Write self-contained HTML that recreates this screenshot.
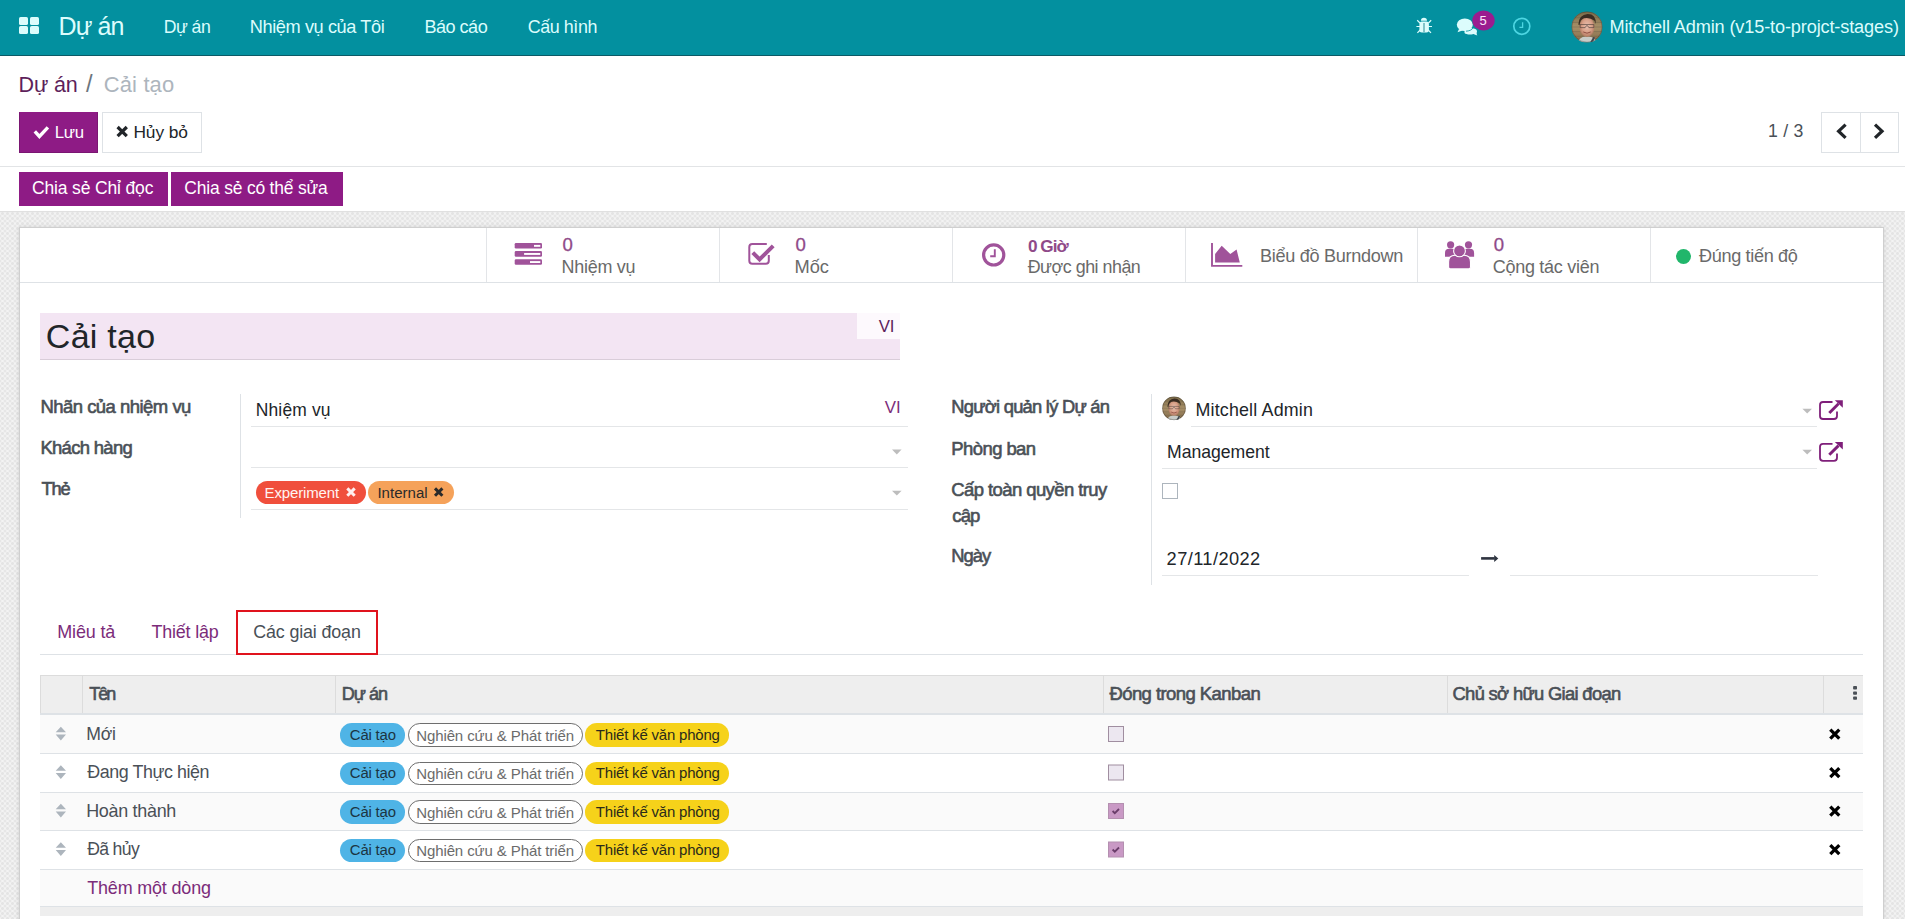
<!DOCTYPE html><html><head><meta charset="utf-8"><style>
html,body{margin:0;padding:0;}
body{width:1905px;height:919px;overflow:hidden;position:relative;background:#fff;font-family:"Liberation Sans",sans-serif;}
.t{position:absolute;white-space:nowrap;}
.b{position:absolute;}
svg{position:absolute;overflow:visible;}
</style></head><body>
<div class="b" style="left:0px;top:0px;width:1905px;height:55px;background:#03909f;"></div>
<div class="b" style="left:0px;top:55px;width:1905px;height:1px;background:#0b5a66;"></div>
<div class="b" style="left:19px;top:17px;width:9.2px;height:7.9px;background:#dcfcfc;border-radius:1.6px;"></div>
<div class="b" style="left:30px;top:17px;width:9.2px;height:7.9px;background:#dcfcfc;border-radius:1.6px;"></div>
<div class="b" style="left:19px;top:26.2px;width:9.2px;height:7.9px;background:#dcfcfc;border-radius:1.6px;"></div>
<div class="b" style="left:30px;top:26.2px;width:9.2px;height:7.9px;background:#dcfcfc;border-radius:1.6px;"></div>
<div class="t" style="left:58.50px;top:11.12px;font-size:25.05px;line-height:31px;letter-spacing:-0.909px;color:#dcfcfc;">Dự án</div>
<div class="t" style="left:163.70px;top:16.17px;font-size:17.69px;line-height:22px;letter-spacing:-0.542px;color:#dcfcfc;">Dự án</div>
<div class="t" style="left:249.80px;top:15.99px;font-size:18.19px;line-height:22px;letter-spacing:-0.416px;color:#dcfcfc;">Nhiệm vụ của Tôi</div>
<div class="t" style="left:424.40px;top:16.02px;font-size:18.12px;line-height:22px;letter-spacing:-0.518px;color:#dcfcfc;">Báo cáo</div>
<div class="t" style="left:527.70px;top:16.08px;font-size:17.93px;line-height:22px;letter-spacing:-0.428px;color:#dcfcfc;">Cấu hình</div>
<div class="t" style="left:1609.40px;top:16.00px;font-size:18.18px;line-height:22px;letter-spacing:-0.147px;color:#dcfcfc;">Mitchell Admin (v15-to-projct-stages)</div>
<div class="t" style="left:18.60px;top:71.84px;font-size:21.52px;line-height:26px;letter-spacing:-0.153px;color:#5e1f5b;">Dự án</div>
<div class="t" style="left:86.00px;top:69.61px;font-size:23.62px;line-height:29px;letter-spacing:0.000px;color:#6c757d;">/</div>
<div class="t" style="left:103.80px;top:71.19px;font-size:21.94px;line-height:27px;letter-spacing:0.142px;color:#adb5bd;">Cải tạo</div>
<div class="b" style="left:19px;top:112px;width:79px;height:41px;background:#8e1b85;border:1px solid #7a1672;border-top-color:#8e1b85;box-sizing:border-box;"></div>
<div class="t" style="left:54.70px;top:121.99px;font-size:16.76px;line-height:21px;letter-spacing:-0.220px;color:#ffffff;">Lưu</div>
<div class="b" style="left:102px;top:112px;width:100px;height:41px;background:#fff;border:1px solid #dee2e6;box-sizing:border-box;"></div>
<div class="t" style="left:133.40px;top:121.78px;font-size:17.36px;line-height:21px;letter-spacing:-0.087px;color:#212529;">Hủy bỏ</div>
<div class="t" style="left:1768.10px;top:120.16px;font-size:17.70px;line-height:22px;letter-spacing:0.193px;color:#495057;">1 / 3</div>
<div class="b" style="left:1821px;top:112px;width:78px;height:41px;background:#fff;border:1px solid #dee2e6;box-sizing:border-box;"></div>
<div class="b" style="left:1860px;top:112px;width:1px;height:41px;background:#dee2e6;"></div>
<div class="b" style="left:0px;top:166px;width:1905px;height:1px;background:#e2e4e6;"></div>
<div class="b" style="left:19px;top:172px;width:149px;height:34px;background:#8e1b85;"></div>
<div class="b" style="left:171px;top:172px;width:172px;height:34px;background:#8e1b85;"></div>
<div class="t" style="left:31.90px;top:177.23px;font-size:17.50px;line-height:22px;letter-spacing:-0.140px;color:#ffffff;">Chia sẻ Chỉ đọc</div>
<div class="t" style="left:184.30px;top:177.75px;font-size:17.45px;line-height:21px;letter-spacing:-0.173px;color:#ffffff;">Chia sẻ có thể sửa</div>
<div class="b" style="left:0px;top:211px;width:1905px;height:708px;background-color:#f9f9f9;background-image:radial-gradient(#e4e4e4 30%,transparent 62%),radial-gradient(#e4e4e4 30%,transparent 62%);background-size:5px 5px;background-position:0 0,2.5px 2.5px;"></div>
<div class="b" style="left:0px;top:211px;width:1905px;height:1px;background:#e0e0e0;"></div>
<div class="b" style="left:19px;top:227px;width:1865px;height:700px;background:#fff;border:1px solid #cfcfcf;box-sizing:border-box;box-shadow:0 0 4px rgba(0,0,0,.12);"></div>
<div class="b" style="left:20px;top:282px;width:1863px;height:1px;background:#dee2e6;"></div>
<div class="b" style="left:486px;top:228px;width:1px;height:54px;background:#e3e5e8;"></div>
<div class="b" style="left:719px;top:228px;width:1px;height:54px;background:#e3e5e8;"></div>
<div class="b" style="left:952px;top:228px;width:1px;height:54px;background:#e3e5e8;"></div>
<div class="b" style="left:1185px;top:228px;width:1px;height:54px;background:#e3e5e8;"></div>
<div class="b" style="left:1417px;top:228px;width:1px;height:54px;background:#e3e5e8;"></div>
<div class="b" style="left:1650px;top:228px;width:1px;height:54px;background:#e3e5e8;"></div>
<div class="t" style="left:562.60px;top:233.35px;font-size:18.60px;line-height:23px;letter-spacing:0.000px;color:#8f4a89;-webkit-text-stroke:0.3px #8f4a89;">0</div>
<div class="t" style="left:561.60px;top:256.07px;font-size:17.97px;line-height:22px;letter-spacing:-0.274px;color:#6a6a6a;">Nhiệm vụ</div>
<div class="t" style="left:795.40px;top:233.35px;font-size:18.60px;line-height:23px;letter-spacing:0.000px;color:#8f4a89;-webkit-text-stroke:0.3px #8f4a89;">0</div>
<div class="t" style="left:794.40px;top:255.96px;font-size:18.28px;line-height:22px;letter-spacing:0.022px;color:#6a6a6a;">Mốc</div>
<div class="t" style="left:1027.90px;top:235.85px;font-size:17.17px;line-height:21px;letter-spacing:-0.933px;color:#8f4a89;font-weight:bold;">0 Giờ</div>
<div class="t" style="left:1027.70px;top:256.10px;font-size:17.88px;line-height:22px;letter-spacing:-0.489px;color:#6a6a6a;">Được ghi nhận</div>
<div class="t" style="left:1259.90px;top:245.03px;font-size:18.10px;line-height:22px;letter-spacing:-0.289px;color:#6a6a6a;">Biểu đồ Burndown</div>
<div class="t" style="left:1493.70px;top:233.35px;font-size:18.60px;line-height:23px;letter-spacing:0.000px;color:#8f4a89;-webkit-text-stroke:0.3px #8f4a89;">0</div>
<div class="t" style="left:1492.70px;top:256.06px;font-size:18.01px;line-height:22px;letter-spacing:-0.277px;color:#6a6a6a;">Cộng tác viên</div>
<div class="b" style="left:1676px;top:249px;width:15px;height:15px;background:#21b66b;border-radius:50%;"></div>
<div class="t" style="left:1699.00px;top:245.02px;font-size:18.11px;line-height:22px;letter-spacing:-0.352px;color:#6a6a6a;">Đúng tiến độ</div>
<div class="b" style="left:40px;top:313px;width:860px;height:47px;background:#f3e5f3;border-bottom:1px solid #d9cdd9;box-sizing:border-box;"></div>
<div class="b" style="left:857px;top:313px;width:43px;height:26px;background:#fdf9fd;"></div>
<div class="t" style="left:878.80px;top:315.98px;font-size:16.78px;line-height:21px;letter-spacing:-0.253px;color:#5e1f5b;">VI</div>
<div class="t" style="left:45.80px;top:316.00px;font-size:34.05px;line-height:41px;letter-spacing:0.243px;color:#212529;">Cải tạo</div>
<div class="b" style="left:240px;top:394px;width:1px;height:124px;background:#dee2e6;"></div>
<div class="t" style="left:40.40px;top:395.38px;font-size:18.52px;line-height:23px;letter-spacing:-0.533px;color:#4a5057;-webkit-text-stroke:0.6px #4a5057;">Nhãn của nhiệm vụ</div>
<div class="t" style="left:40.40px;top:436.40px;font-size:18.45px;line-height:23px;letter-spacing:-0.678px;color:#4a5057;-webkit-text-stroke:0.6px #4a5057;">Khách hàng</div>
<div class="t" style="left:41.40px;top:477.95px;font-size:18.30px;line-height:22px;letter-spacing:-1.086px;color:#4a5057;-webkit-text-stroke:0.6px #4a5057;">Thẻ</div>
<div class="t" style="left:255.80px;top:399.74px;font-size:17.47px;line-height:21px;letter-spacing:0.141px;color:#212529;">Nhiệm vụ</div>
<div class="t" style="left:884.80px;top:396.95px;font-size:16.86px;line-height:21px;letter-spacing:-0.135px;color:#7c2c7a;">VI</div>
<div class="b" style="left:251px;top:426px;width:657px;height:1px;background:#e4e6e8;"></div>
<div class="b" style="left:251px;top:467px;width:657px;height:1px;background:#e4e6e8;"></div>
<div class="b" style="left:251px;top:509px;width:657px;height:1px;background:#e4e6e8;"></div>
<div class="b" style="left:1151px;top:394px;width:1px;height:191px;background:#dee2e6;"></div>
<div class="t" style="left:951.30px;top:395.44px;font-size:18.35px;line-height:23px;letter-spacing:-0.751px;color:#4a5057;-webkit-text-stroke:0.6px #4a5057;">Người quản lý Dự án</div>
<div class="t" style="left:951.30px;top:437.39px;font-size:18.49px;line-height:23px;letter-spacing:-0.584px;color:#4a5057;-webkit-text-stroke:0.6px #4a5057;">Phòng ban</div>
<div class="t" style="left:951.30px;top:478.39px;font-size:18.49px;line-height:23px;letter-spacing:-0.585px;color:#4a5057;-webkit-text-stroke:0.6px #4a5057;">Cấp toàn quyền truy</div>
<div class="t" style="left:952.30px;top:504.37px;font-size:18.55px;line-height:23px;letter-spacing:-0.930px;color:#4a5057;-webkit-text-stroke:0.6px #4a5057;">cập</div>
<div class="t" style="left:951.30px;top:544.42px;font-size:18.40px;line-height:23px;letter-spacing:-0.991px;color:#4a5057;-webkit-text-stroke:0.6px #4a5057;">Ngày</div>
<div class="t" style="left:1195.50px;top:399.10px;font-size:17.87px;line-height:22px;letter-spacing:0.170px;color:#212529;">Mitchell Admin</div>
<div class="t" style="left:1167.00px;top:441.19px;font-size:17.62px;line-height:22px;letter-spacing:-0.004px;color:#212529;">Management</div>
<div class="t" style="left:1166.60px;top:547.98px;font-size:18.24px;line-height:22px;letter-spacing:0.410px;color:#212529;">27/11/2022</div>
<div class="b" style="left:1191px;top:426px;width:626px;height:1px;background:#e4e6e8;"></div>
<div class="b" style="left:1162px;top:468px;width:655px;height:1px;background:#e4e6e8;"></div>
<div class="b" style="left:1162px;top:575px;width:307px;height:1px;background:#e4e6e8;"></div>
<div class="b" style="left:1510px;top:575px;width:308px;height:1px;background:#e4e6e8;"></div>
<div class="b" style="left:1162px;top:483px;width:16px;height:16px;background:#fff;border:1px solid #adb5bd;box-sizing:border-box;"></div>
<div class="t" style="left:57.20px;top:621.08px;font-size:17.95px;line-height:22px;letter-spacing:-0.128px;color:#7c2c7a;">Miêu tả</div>
<div class="t" style="left:151.40px;top:621.09px;font-size:17.91px;line-height:22px;letter-spacing:-0.162px;color:#7c2c7a;">Thiết lập</div>
<div class="t" style="left:253.30px;top:621.10px;font-size:17.89px;line-height:22px;letter-spacing:-0.149px;color:#495057;">Các giai đoạn</div>
<div class="b" style="left:40px;top:654px;width:1823px;height:1px;background:#dee2e6;"></div>
<div class="b" style="left:236px;top:610px;width:142px;height:45px;border:2.5px solid #e0131d;box-sizing:border-box;"></div>
<div class="b" style="left:40px;top:675px;width:1823px;height:38px;background:#eeeeee;"></div>
<div class="b" style="left:40px;top:713px;width:1823px;height:3px;background:#dee2e6;"></div>
<div class="b" style="left:40px;top:675px;width:1823px;height:1px;background:#dcdcdc;"></div>
<div class="b" style="left:40px;top:675px;width:1px;height:38px;background:#dcdcdc;"></div>
<div class="b" style="left:82px;top:675px;width:1px;height:38px;background:#dcdcdc;"></div>
<div class="b" style="left:335px;top:675px;width:1px;height:38px;background:#dcdcdc;"></div>
<div class="b" style="left:1103px;top:675px;width:1px;height:38px;background:#dcdcdc;"></div>
<div class="b" style="left:1447px;top:675px;width:1px;height:38px;background:#dcdcdc;"></div>
<div class="b" style="left:1823px;top:675px;width:1px;height:38px;background:#dcdcdc;"></div>
<div class="t" style="left:89.20px;top:683.06px;font-size:17.99px;line-height:22px;letter-spacing:-1.916px;color:#4a5057;-webkit-text-stroke:0.6px #4a5057;">Tên</div>
<div class="t" style="left:341.70px;top:683.01px;font-size:18.14px;line-height:22px;letter-spacing:-1.008px;color:#4a5057;-webkit-text-stroke:0.6px #4a5057;">Dự án</div>
<div class="t" style="left:1109.40px;top:682.37px;font-size:18.54px;line-height:23px;letter-spacing:-0.588px;color:#4a5057;-webkit-text-stroke:0.6px #4a5057;">Đóng trong Kanban</div>
<div class="t" style="left:1452.50px;top:682.43px;font-size:18.39px;line-height:23px;letter-spacing:-0.682px;color:#4a5057;-webkit-text-stroke:0.6px #4a5057;">Chủ sở hữu Giai đoạn</div>
<div class="b" style="left:40px;top:715px;width:1823px;height:38.5px;background:#fafafa;"></div>
<div class="b" style="left:40px;top:753.5px;width:1823px;height:38.5px;background:#ffffff;"></div>
<div class="b" style="left:40px;top:792px;width:1823px;height:38.5px;background:#fafafa;"></div>
<div class="b" style="left:40px;top:830.5px;width:1823px;height:38.5px;background:#ffffff;"></div>
<div class="b" style="left:40px;top:869px;width:1823px;height:37px;background:#fafafa;"></div>
<div class="b" style="left:40px;top:753px;width:1823px;height:1px;background:#dee2e6;"></div>
<div class="b" style="left:40px;top:792px;width:1823px;height:1px;background:#dee2e6;"></div>
<div class="b" style="left:40px;top:830px;width:1823px;height:1px;background:#dee2e6;"></div>
<div class="b" style="left:40px;top:869px;width:1823px;height:1px;background:#dee2e6;"></div>
<div class="b" style="left:40px;top:906px;width:1823px;height:10px;background:#eeeeee;border-top:1px solid #dee2e6;box-sizing:border-box;"></div>
<div class="t" style="left:86.20px;top:723.19px;font-size:17.62px;line-height:22px;letter-spacing:-0.166px;color:#4a5057;">Mới</div>
<div class="t" style="left:87.20px;top:761.10px;font-size:17.87px;line-height:22px;letter-spacing:-0.421px;color:#4a5057;">Đang Thực hiện</div>
<div class="t" style="left:86.20px;top:800.07px;font-size:17.96px;line-height:22px;letter-spacing:-0.297px;color:#4a5057;">Hoàn thành</div>
<div class="t" style="left:87.20px;top:838.18px;font-size:17.64px;line-height:22px;letter-spacing:-0.664px;color:#4a5057;">Đã hủy</div>
<div class="t" style="left:87.20px;top:877.08px;font-size:17.95px;line-height:22px;letter-spacing:-0.162px;color:#7c2c7a;">Thêm một dòng</div>
<div class="b" style="left:256px;top:481px;width:109.5px;height:23.4px;background:#f04f3c;border-radius:11.7px;"></div>
<div class="t" style="left:264.60px;top:482.60px;font-size:15.01px;line-height:19px;letter-spacing:-0.148px;color:#fff4f2;">Experiment</div>
<div class="b" style="left:368px;top:481px;width:85.8px;height:23.4px;background:#f5a25a;border-radius:11.7px;"></div>
<div class="t" style="left:377.40px;top:482.59px;font-size:15.02px;line-height:19px;letter-spacing:0.015px;color:#2a2a2a;">Internal</div>
<div class="b" style="left:340.3px;top:723.2px;width:64.6px;height:23.7px;background:#4fb4e6;border-radius:11.85px;"></div>
<div class="t" style="left:349.80px;top:726.12px;font-size:14.93px;line-height:18px;letter-spacing:-0.187px;color:#1c3442;">Cải tạo</div>
<div class="b" style="left:408px;top:723.2px;width:174.9px;height:23.7px;background:#fff;border:1.3px solid #6e6e6e;box-sizing:border-box;border-radius:11.85px;"></div>
<div class="t" style="left:416.20px;top:725.60px;font-size:15.01px;line-height:19px;letter-spacing:-0.102px;color:#6b6b6b;">Nghiên cứu &amp; Phát triển</div>
<div class="b" style="left:585px;top:723.2px;width:144.3px;height:23.7px;background:#f6d21a;border-radius:11.85px;"></div>
<div class="t" style="left:595.80px;top:726.11px;font-size:14.98px;line-height:18px;letter-spacing:-0.189px;color:#2b2b1a;">Thiết kế văn phòng</div>
<div class="b" style="left:340.3px;top:761.7px;width:64.6px;height:23.7px;background:#4fb4e6;border-radius:11.85px;"></div>
<div class="t" style="left:349.80px;top:764.12px;font-size:14.93px;line-height:18px;letter-spacing:-0.187px;color:#1c3442;">Cải tạo</div>
<div class="b" style="left:408px;top:761.7px;width:174.9px;height:23.7px;background:#fff;border:1.3px solid #6e6e6e;box-sizing:border-box;border-radius:11.85px;"></div>
<div class="t" style="left:416.20px;top:763.60px;font-size:15.01px;line-height:19px;letter-spacing:-0.102px;color:#6b6b6b;">Nghiên cứu &amp; Phát triển</div>
<div class="b" style="left:585px;top:761.7px;width:144.3px;height:23.7px;background:#f6d21a;border-radius:11.85px;"></div>
<div class="t" style="left:595.80px;top:764.11px;font-size:14.98px;line-height:18px;letter-spacing:-0.189px;color:#2b2b1a;">Thiết kế văn phòng</div>
<div class="b" style="left:340.3px;top:800.2px;width:64.6px;height:23.7px;background:#4fb4e6;border-radius:11.85px;"></div>
<div class="t" style="left:349.80px;top:803.12px;font-size:14.93px;line-height:18px;letter-spacing:-0.187px;color:#1c3442;">Cải tạo</div>
<div class="b" style="left:408px;top:800.2px;width:174.9px;height:23.7px;background:#fff;border:1.3px solid #6e6e6e;box-sizing:border-box;border-radius:11.85px;"></div>
<div class="t" style="left:416.20px;top:802.60px;font-size:15.01px;line-height:19px;letter-spacing:-0.102px;color:#6b6b6b;">Nghiên cứu &amp; Phát triển</div>
<div class="b" style="left:585px;top:800.2px;width:144.3px;height:23.7px;background:#f6d21a;border-radius:11.85px;"></div>
<div class="t" style="left:595.80px;top:803.11px;font-size:14.98px;line-height:18px;letter-spacing:-0.189px;color:#2b2b1a;">Thiết kế văn phòng</div>
<div class="b" style="left:340.3px;top:838.7px;width:64.6px;height:23.7px;background:#4fb4e6;border-radius:11.85px;"></div>
<div class="t" style="left:349.80px;top:841.12px;font-size:14.93px;line-height:18px;letter-spacing:-0.187px;color:#1c3442;">Cải tạo</div>
<div class="b" style="left:408px;top:838.7px;width:174.9px;height:23.7px;background:#fff;border:1.3px solid #6e6e6e;box-sizing:border-box;border-radius:11.85px;"></div>
<div class="t" style="left:416.20px;top:840.60px;font-size:15.01px;line-height:19px;letter-spacing:-0.102px;color:#6b6b6b;">Nghiên cứu &amp; Phát triển</div>
<div class="b" style="left:585px;top:838.7px;width:144.3px;height:23.7px;background:#f6d21a;border-radius:11.85px;"></div>
<div class="t" style="left:595.80px;top:841.11px;font-size:14.98px;line-height:18px;letter-spacing:-0.189px;color:#2b2b1a;">Thiết kế văn phòng</div>
<svg width="1905" height="919" style="left:0;top:0"><path d="M34.8,131.4 L39.4,136.4 L47.9,127.4" stroke="#fff" stroke-width="3.4" fill="none" stroke-linecap="butt" stroke-linejoin="miter"/><path d="M117.6,127 L126.8,136.2 M126.8,127 L117.6,136.2" stroke="#212529" stroke-width="3.2" fill="none"/><path d="M1845.6,124.6 L1838.6,131.2 L1845.6,137.8" stroke="#212529" stroke-width="3.2" fill="none"/><path d="M1875,124.6 L1882,131.2 L1875,137.8" stroke="#212529" stroke-width="3.2" fill="none"/><g fill="#dcfcfc" stroke="#dcfcfc"><path d="M1420.9,20.8 A3.05,3 0 0 1 1427,20.8 Z" stroke="none"/><rect x="1419.4" y="21.6" width="9.5" height="11" rx="2.5" stroke="none"/><path d="M1416.4,26.5 L1432,26.5 M1417.2,20.3 L1420,23 M1431.2,20.3 L1428.4,23 M1417.4,32.8 L1420.2,30 M1431,32.8 L1428.2,30" stroke-width="1.2" fill="none"/></g><rect x="1423.4" y="23" width="1.2" height="9" fill="#4a9ea6"/><g fill="#dcfcfc"><path d="M1464.5,28 C1468,28 1477.5,27.5 1477,31.5 C1476.5,33 1476.5,34 1477.3,35.4 C1475.5,35 1474.3,34.4 1473.5,34 C1470,35 1466,34.5 1464.5,33 Z"/><ellipse cx="1464.8" cy="24.8" rx="8" ry="6.3"/><path d="M1459,29 L1457.5,32.3 L1462.5,30.5 Z"/></g><path d="M1466,31.2 C1469,31 1472,30 1473,28" stroke="#03909f" stroke-width="0.8" fill="none"/><ellipse cx="1483.5" cy="20.5" rx="11.2" ry="10" fill="#9b1c8f"/><text x="1483.2" y="25.4" font-family="Liberation Sans" font-size="13" fill="#fbe8fb" text-anchor="middle">5</text><circle cx="1521.8" cy="26.3" r="8" stroke="#4dd6e2" stroke-width="1.7" fill="none"/><path d="M1522.6,22.2 L1522.6,27.3 L1519.4,27.3" stroke="#4dd6e2" stroke-width="1.3" fill="none"/><defs><clipPath id="av1"><circle cx="1587" cy="27" r="15.5"/></clipPath><linearGradient id="av1b" x1="0" y1="0" x2="0" y2="1"><stop offset="0" stop-color="#7a6a48"/><stop offset="0.5" stop-color="#a89068"/><stop offset="1" stop-color="#806848"/></linearGradient><radialGradient id="av1f" cx="0.5" cy="0.45" r="0.55"><stop offset="0" stop-color="#e8c0b0"/><stop offset="0.6" stop-color="#d8a088"/><stop offset="1" stop-color="#b07860"/></radialGradient></defs><g clip-path="url(#av1)"><g transform="translate(1571.5,11.5) scale(0.31)"><rect x="0" y="0" width="100" height="100" fill="url(#av1b)"/><path d="M0,20 L100,20 M0,35 L100,35 M0,50 L100,50 M0,65 L100,65 M0,80 L100,80" stroke="#6e6048" stroke-width="3" opacity="0.5"/><ellipse cx="50" cy="50" rx="24" ry="32" fill="url(#av1f)"/><path d="M22,42 Q24,10 52,8 Q80,8 78,40 L74,30 Q60,18 40,22 Q28,26 26,44 Z" fill="#3a2c22"/><path d="M28,42 L72,42 L72,52 L56,52 L52,46 L48,46 L44,52 L28,52 Z" fill="none" stroke="#4a3c38" stroke-width="2.4" opacity="0.85"/><path d="M38,66 Q50,74 62,66" stroke="#8a4a40" stroke-width="3" fill="none"/><path d="M18,100 Q30,78 50,82 Q70,78 84,100 Z" fill="#c8ccc8"/><path d="M60,100 L70,82 L76,84 L68,100 Z" fill="#404850"/></g></g><circle cx="1587" cy="27" r="15.2" fill="none" stroke="rgba(30,30,30,0.35)" stroke-width="0.8"/><defs><clipPath id="av2"><circle cx="1174" cy="408.3" r="11.8"/></clipPath><linearGradient id="av2b" x1="0" y1="0" x2="0" y2="1"><stop offset="0" stop-color="#7a6a48"/><stop offset="0.5" stop-color="#a89068"/><stop offset="1" stop-color="#806848"/></linearGradient><radialGradient id="av2f" cx="0.5" cy="0.45" r="0.55"><stop offset="0" stop-color="#e8c0b0"/><stop offset="0.6" stop-color="#d8a088"/><stop offset="1" stop-color="#b07860"/></radialGradient></defs><g clip-path="url(#av2)"><g transform="translate(1162.2,396.5) scale(0.23600000000000002)"><rect x="0" y="0" width="100" height="100" fill="url(#av2b)"/><path d="M0,20 L100,20 M0,35 L100,35 M0,50 L100,50 M0,65 L100,65 M0,80 L100,80" stroke="#6e6048" stroke-width="3" opacity="0.5"/><ellipse cx="50" cy="50" rx="24" ry="32" fill="url(#av2f)"/><path d="M22,42 Q24,10 52,8 Q80,8 78,40 L74,30 Q60,18 40,22 Q28,26 26,44 Z" fill="#3a2c22"/><path d="M28,42 L72,42 L72,52 L56,52 L52,46 L48,46 L44,52 L28,52 Z" fill="none" stroke="#4a3c38" stroke-width="2.4" opacity="0.85"/><path d="M38,66 Q50,74 62,66" stroke="#8a4a40" stroke-width="3" fill="none"/><path d="M18,100 Q30,78 50,82 Q70,78 84,100 Z" fill="#c8ccc8"/><path d="M60,100 L70,82 L76,84 L68,100 Z" fill="#404850"/></g></g><circle cx="1174" cy="408.3" r="11.5" fill="none" stroke="rgba(30,30,30,0.35)" stroke-width="0.8"/><rect x="514.7" y="243" width="27.3" height="5.6" rx="1.3" fill="#a0539a"/><rect x="534" y="244.9" width="6.2999999999999545" height="1.9" fill="#fff"/><rect x="514.7" y="251.1" width="27.3" height="5.6" rx="1.3" fill="#a0539a"/><rect x="524.1" y="253.0" width="16.199999999999932" height="1.9" fill="#fff"/><rect x="514.7" y="259.2" width="27.3" height="5.6" rx="1.3" fill="#a0539a"/><rect x="530" y="261.09999999999997" width="10.299999999999955" height="1.9" fill="#fff"/><path d="M766.8,244 L752.3,244 Q749.3,244 749.3,247 L749.3,260.8 Q749.3,263.8 752.3,263.8 L765.8,263.8 Q768.8,263.8 768.8,260.8 L768.8,255" stroke="#a0539a" stroke-width="2" fill="none"/><path d="M752.8,252.6 L759.6,259.4 L773.2,245.8" stroke="#a0539a" stroke-width="4" fill="none"/><circle cx="993.7" cy="254.9" r="10.1" stroke="#a0539a" stroke-width="3.2" fill="none"/><path d="M994.8,249.2 L994.8,256.2 L990.2,256.2" stroke="#a0539a" stroke-width="1.9" fill="none"/><path d="M1212,243.1 L1212,265.9 L1242.3,265.9" stroke="#a0539a" stroke-width="1.9" fill="none"/><path d="M1215.1,262.5 L1215.1,254.1 L1221.7,245.8 L1230.3,254.1 L1236.6,249.6 L1239.8,262.5 Z" fill="#a0539a"/><g fill="#a0539a"><circle cx="1450.6" cy="244.8" r="3.6"/><circle cx="1468.5" cy="244.8" r="3.6"/><path d="M1445,256.8 L1445,253 Q1445,248.8 1449.2,248.8 L1452,248.8 Q1455.8,248.8 1455.8,253 L1455.8,256.8 Z"/><path d="M1474.1,256.8 L1474.1,253 Q1474.1,248.8 1469.9,248.8 L1467.1,248.8 Q1463.3,248.8 1463.3,253 L1463.3,256.8 Z"/></g><g fill="#a0539a" stroke="#fff" stroke-width="1.1"><path d="M1448.6,268.9 L1448.6,262 Q1448.6,255.3 1455,255.3 L1464,255.3 Q1470.5,255.3 1470.5,262 L1470.5,267 Q1470.5,268.9 1468.6,268.9 L1450.5,268.9 Q1448.6,268.9 1448.6,267 Z"/><circle cx="1459.5" cy="250.9" r="5.9"/></g><path d="M892,449.6 L901.6,449.6 L896.8,454.40000000000003 Z" fill="#bdbdbd"/><path d="M892,490.8 L901.6,490.8 L896.8,495.6 Z" fill="#bdbdbd"/><path d="M1802.4,408.7 L1812.0,408.7 L1807.2,413.5 Z" fill="#bdbdbd"/><path d="M1802.4,449.7 L1812.0,449.7 L1807.2,454.5 Z" fill="#bdbdbd"/><g transform="translate(0,0)"><path d="M1832.5,402 L1823,402 Q1820,402 1820,405 L1820,416 Q1820,419 1823,419 L1834,419 Q1837,419 1837,416 L1837,411.6" stroke="#7f1f7a" stroke-width="1.8" fill="none"/><path d="M1829.3,413 L1838.5,403.8" stroke="#7f1f7a" stroke-width="2.9" fill="none"/><path d="M1834.8,400.2 L1842.8,400.2 L1842.8,407.8 Z" fill="#7f1f7a"/></g><g transform="translate(0,41.8)"><path d="M1832.5,402 L1823,402 Q1820,402 1820,405 L1820,416 Q1820,419 1823,419 L1834,419 Q1837,419 1837,416 L1837,411.6" stroke="#7f1f7a" stroke-width="1.8" fill="none"/><path d="M1829.3,413 L1838.5,403.8" stroke="#7f1f7a" stroke-width="2.9" fill="none"/><path d="M1834.8,400.2 L1842.8,400.2 L1842.8,407.8 Z" fill="#7f1f7a"/></g><rect x="1481.1" y="557.1" width="13.5" height="2.6" fill="#2e3440"/><path d="M1494.2,555.1 L1498.3,558.5 L1494.2,562.1 Z" fill="#2e3440"/><rect x="1853.1" y="686.1" width="3.9" height="3.4" rx="0.8" fill="#4a5057"/><rect x="1853.1" y="691.4" width="3.9" height="3.4" rx="0.8" fill="#4a5057"/><rect x="1853.1" y="696.4" width="3.9" height="3.4" rx="0.8" fill="#4a5057"/><path d="M55.7,732.3 L66,732.3 L60.85,726.8 Z M55.7,734.4 L66,734.4 L60.85,740.5 Z" fill="#adb5bd"/><path d="M1830.3,729.7 L1839.3,738.7 M1839.3,729.7 L1830.3,738.7" stroke="#000" stroke-width="3.3" fill="none"/><rect x="1108.5" y="726.5" width="15" height="15" fill="#ece7f0" stroke="#a08ea0" stroke-width="1"/><path d="M55.7,770.8 L66,770.8 L60.85,765.3 Z M55.7,772.9 L66,772.9 L60.85,779.0 Z" fill="#adb5bd"/><path d="M1830.3,768.2 L1839.3,777.2 M1839.3,768.2 L1830.3,777.2" stroke="#000" stroke-width="3.3" fill="none"/><rect x="1108.5" y="765.0" width="15" height="15" fill="#ece7f0" stroke="#a08ea0" stroke-width="1"/><path d="M55.7,809.3 L66,809.3 L60.85,803.8 Z M55.7,811.4 L66,811.4 L60.85,817.5 Z" fill="#adb5bd"/><path d="M1830.3,806.7 L1839.3,815.7 M1839.3,806.7 L1830.3,815.7" stroke="#000" stroke-width="3.3" fill="none"/><rect x="1108.5" y="803.5" width="15" height="15" fill="#c999c5" stroke="#b490b0" stroke-width="1"/><path d="M1112.6,811 L1114.8,813.2 L1119,809" stroke="#6a3d6a" stroke-width="1.8" fill="none"/><path d="M55.7,847.8 L66,847.8 L60.85,842.3 Z M55.7,849.9 L66,849.9 L60.85,856.0 Z" fill="#adb5bd"/><path d="M1830.3,845.2 L1839.3,854.2 M1839.3,845.2 L1830.3,854.2" stroke="#000" stroke-width="3.3" fill="none"/><rect x="1108.5" y="842.0" width="15" height="15" fill="#c999c5" stroke="#b490b0" stroke-width="1"/><path d="M1112.6,849.5 L1114.8,851.7 L1119,847.5" stroke="#6a3d6a" stroke-width="1.8" fill="none"/><path d="M347.3,488.4 L354.7,495.8 M354.7,488.4 L347.3,495.8" stroke="#ffeeee" stroke-width="3" fill="none"/><path d="M435,488.4 L442.4,495.8 M442.4,488.4 L435,495.8" stroke="#2a2a2a" stroke-width="3" fill="none"/></svg>
</body></html>
